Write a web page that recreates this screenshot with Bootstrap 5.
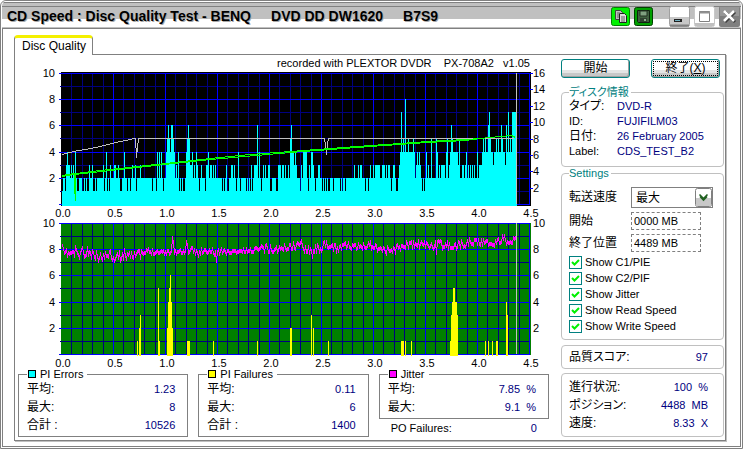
<!DOCTYPE html>
<html lang="ja">
<head>
<meta charset="utf-8">
<meta name="viewport" content="width=device-width, initial-scale=1">
<title>CD Speed : Disc Quality Test</title>
<link href="https://cdn.jsdelivr.net/npm/bootstrap@5.3.0/dist/css/bootstrap.min.css" rel="stylesheet">
<style>
  body { font: 11px/15px "Liberation Sans", "Noto Sans CJK JP", sans-serif; font-feature-settings: "palt"; color: #000; background: #fff; }
  .jp { font-size: 12px; }
  .app-window { border: 1px solid #808080; border-radius: 6px 6px 0 0; padding: 0 1px 1px; background: #fff; }
  .title-bar { height: 27px; padding: 3px 1px 0 5px; border-radius: 5px 5px 0 0; background: linear-gradient(#fff 0 1px, #808080 1px 2px, #c0c0c0 2px 5px, #808080 5px 6px, #c0c0c0 6px 18px, #fff 18px 26px, #c0c0c0 26px); }
  .title-text { font-size: 14px; font-weight: 700; line-height: 16px; white-space: pre; gap: 20px; text-shadow: 1px 1px 0 #a8a8a8; }
  .cap-btn { border: 0; padding: 0; background: none; line-height: 0; }
  .app-body { border: 1px solid #808080; padding: 6px 14px 4px 11px; }
  .sheet-tab { border: 1px solid #808080; border-top: 3px solid #f4f000; border-bottom: 0; border-radius: 4px 4px 0 0; background: #fff; padding: 0 7px; width: 79px; height: 20px; margin-bottom: -1px; font-size: 12px; line-height: 15px; text-align: left; position: relative; white-space: nowrap; color: #000; }
  .sheet { border: 1px solid #808080; box-shadow: 1px 1px 0 #c0c0c0; padding: 0 1px 3px 3px; gap: 12px; }
  .charts { min-width: 0; }
  .caption-line { height: 15px; line-height: 17px; padding-right: 19px; font-size: 11px; white-space: pre; }
  .side { width: 163px; flex: none; padding-top: 4px; }
  svg.plot { display: block; width: 100%; height: auto; font-size: 11px; overflow: visible; }
  .stats { display: grid; grid-template-columns: repeat(3, 1fr); gap: 10px; }
  .box { border: 1px solid #808080; padding: 0 12px 2px 8px; min-width: 0; }
  .box legend, .soft legend { float: none; width: auto; margin: 0; font-size: 11px; line-height: 12px; height: 12px; }
  .box legend { padding: 0 4px 0 1px; display: flex; align-items: center; gap: 4px; }
  .swatch { width: 8px; height: 8px; border: 1px solid #000; }
  .swatch-pie { background: #0ff; }
  .swatch-pif { background: #ff0; }
  .swatch-jit { background: #f0f; }
  .line18 { display: flex; justify-content: space-between; align-items: center; height: 18px; white-space: pre; }
  .val { color: #000080; }
  .soft { border: 1px solid #c0c0c0; border-radius: 4px; padding: 0 15px 0 7px; }
  .soft legend { color: #008080; padding: 0 2px 0 0; }
  .soft.settings { padding: 0 8px 6px 7px; }
  .soft.score { margin-top: 5px; padding-top: 2px; padding-bottom: 2px; }
  .push { height: 19px; width: 69px; padding: 0; border: 1px solid #008080; border-radius: 3px; background: linear-gradient(#fff 0 10px, #e4e4e4 10px 13px, #c8c8c8 13px); box-shadow: inset -1px -1px 0 #a0a0a0; font-size: 12px; line-height: 15px; color: #000; }
  .push.on { outline: 1px dotted #000; outline-offset: -3px; }
  .info { display: grid; grid-template-columns: 48px 1fr; line-height: 15px; margin: 0; padding: 1px 0 7px; white-space: nowrap; }
  .info dt, .info dd { margin: 0; font-weight: 400; height: 15px; }
  .opts { display: grid; grid-template-columns: 62px 1fr; align-items: center; row-gap: 4px; white-space: nowrap; }
  .opts .form-select { width: 82px; height: 21px; padding: 0 20px 0 4px; border: 1px solid #808080; border-radius: 0; font-size: 12px; line-height: 18px; color: #000; background: #fff url("data:image/svg+xml,%3Csvg xmlns='http://www.w3.org/2000/svg' width='17' height='19'%3E%3Crect x='.5' y='.5' width='16' height='18' rx='2' fill='%23fff' stroke='%23808080'/%3E%3Cpath d='M1 10h15v8H1z' fill='%23c8c8c8'/%3E%3Cpath d='M4.500 6.500l4 4 4-4M5 8.500l3.500 3.500 3.500-3.500' fill='none' stroke='%23206020' stroke-width='1.600'/%3E%3C/svg%3E") no-repeat right 0 center / 17px 19px; }
  .opts .form-control { width: 70px; height: 18px; min-height: 0; padding: 0 2px; border: 1px dashed #808080; border-radius: 0; font-size: 11px; line-height: 16px; color: #000; }
  .ticks { display: grid; row-gap: 3px; }
  .tick { display: flex; align-items: center; gap: 3px; min-height: 0; height: 13px; margin: 0; padding: 0; }
  .tick .form-check-input { float: none; margin: 0; width: 13px; height: 13px; border: 1px solid #008080; border-radius: 0; background-color: #fff; }
  .tick .form-check-input:checked { background-image: url("data:image/svg+xml,%3Csvg xmlns='http://www.w3.org/2000/svg' viewBox='0 0 11 11'%3E%3Cpath d='M2 5l2.500 2.500L9 3' fill='none' stroke='%2300f000' stroke-width='2'/%3E%3C/svg%3E"); border-color: #008080; background-color: #fff; }
</style>
</head>
<body>
<div class="app-window d-flex flex-column min-vh-100">
  <header class="title-bar d-flex align-items-center">
    <h1 class="title-text d-flex flex-grow-1 m-0"><span>CD Speed : Disc Quality Test - BENQ</span><span>DVD DD DW1620</span><span>B7S9</span></h1>
    <button class="cap-btn me-1" type="button" aria-label="Copy">
      <svg width="19" height="19"><rect x=".5" y=".5" width="18" height="18" rx="2" fill="#00f000" stroke="#008000"/><path d="M4.500 3.500h5l2 2v7h-7z" fill="#c0c0c0" stroke="#404040"/><path d="M8.500 6.500h5l2 2v7h-7z" fill="#e0e0e0" stroke="#202020"/><path d="M10 10h4M10 12h4M10 14h4M6 6h3M6 8h2M6 10h2" stroke="#606060"/></svg>
    </button>
    <button class="cap-btn me-3" type="button" aria-label="Save">
      <svg width="19" height="19"><rect x=".5" y=".5" width="18" height="18" rx="2" fill="#00a000" stroke="#004000"/><path d="M3.500 3.500h12v12h-11l-1-1z" fill="#406040" stroke="#102010"/><path d="M6 4h7v5H6z" fill="#80a080" stroke="#203020"/><path d="M6 11h7v4H6z" fill="#304030"/><path d="M10 12h2v2h-2z" fill="#90b090"/></svg>
    </button>
    <button class="cap-btn" type="button" aria-label="Minimize">
      <svg width="21" height="21"><rect x=".5" y=".5" width="20" height="20" rx="2" fill="#fff" stroke="#a0a0a0"/><path d="M1 11h19v8H1z" fill="#c8c8c8"/><path d="M1 19.500h19" stroke="#808080" stroke-width="2"/><path d="M5 13h8v3H5z" fill="#202020"/><path d="M6 14h5v1H6z" fill="#70b0c0"/></svg>
    </button>
    <button class="cap-btn mx-1" type="button" aria-label="Maximize">
      <svg width="21" height="21"><rect x=".5" y=".5" width="20" height="20" rx="2" fill="#fff" stroke="#c8c8c8"/><path d="M1 17h19v3H1z" fill="#c0c0c0"/><path d="M5.500 5.500h10v10h-10z" fill="#fff" stroke="#808080"/><path d="M5 6.500h11" stroke="#909090" stroke-width="2"/></svg>
    </button>
    <button class="cap-btn" type="button" aria-label="Close">
      <svg width="21" height="21"><rect width="21" height="21" rx="2" fill="#808080"/><path d="M1 1h19v9H1z" fill="#989898"/><path d="M6 6l10 10M16 6L6 16" stroke="#404040" stroke-width="3"/><path d="M5 5l10 10M15 5L5 15" stroke="#fff" stroke-width="2.500"/></svg>
    </button>
  </header>

  <main class="app-body flex-grow-1">
    <button class="sheet-tab d-block" type="button">Disc Quality</button>
    <div class="sheet d-flex">
      <section class="charts flex-grow-1">
        <div class="caption-line text-end">recorded with PLEXTOR DVDR    PX-708A2   v1.05</div>
        <svg class="plot" id="errors" viewBox="18 70 531 149" role="img" aria-label="PI Errors"></svg>
        <svg class="plot" id="failures" viewBox="18 219 531 149" role="img" aria-label="PI Failures / Jitter"></svg>
        <div class="stats align-items-start">
          <fieldset class="box">
            <legend><span class="swatch swatch-pie"></span>PI Errors</legend>
            <div class="line18"><span class="jp">平均:</span><span class="val">1.23</span></div>
            <div class="line18"><span class="jp">最大:</span><span class="val">8</span></div>
            <div class="line18"><span class="jp">合計 :</span><span class="val">10526</span></div>
          </fieldset>
          <fieldset class="box">
            <legend><span class="swatch swatch-pif"></span>PI Failures</legend>
            <div class="line18"><span class="jp">平均:</span><span class="val">0.11</span></div>
            <div class="line18"><span class="jp">最大:</span><span class="val">6</span></div>
            <div class="line18"><span class="jp">合計 :</span><span class="val">1400</span></div>
          </fieldset>
          <div>
            <fieldset class="box">
              <legend><span class="swatch swatch-jit"></span>Jitter</legend>
              <div class="line18"><span class="jp">平均:</span><span class="val">7.85  %</span></div>
              <div class="line18"><span class="jp">最大:</span><span class="val">9.1  %</span></div>
            </fieldset>
            <div class="line18 ps-2 pe-2 me-1 ms-1"><span>PO Failures:</span><span class="val">0</span></div>
          </div>
        </div>
      </section>

      <aside class="side d-flex flex-column">
        <div class="d-flex justify-content-between pe-1 mb-2">
          <button class="push" type="button">開始</button>
          <button class="push on" type="button">終了(<u>X</u>)</button>
        </div>
        <fieldset class="soft">
          <legend class="jp">ディスク情報</legend>
          <dl class="info">
            <dt class="jp">タイプ:</dt><dd class="val">DVD-R</dd>
            <dt>ID:</dt><dd class="val">FUJIFILM03</dd>
            <dt class="jp">日付:</dt><dd class="val">26 February 2005</dd>
            <dt>Label:</dt><dd class="val">CDS_TEST_B2</dd>
          </dl>
        </fieldset>
        <fieldset class="soft settings">
          <legend>Settings</legend>
          <div class="opts pt-1 mt-1">
            <label class="jp" for="speed">転送速度</label>
            <select class="form-select" id="speed"><option>最大</option></select>
            <label class="jp" for="from">開始</label>
            <input class="form-control" id="from" type="text" value="0000 MB">
            <label class="jp" for="to">終了位置</label>
            <input class="form-control" id="to" type="text" value="4489 MB">
          </div>
          <div class="ticks pt-1">
            <div class="form-check tick"><input class="form-check-input" type="checkbox" id="c1" checked><label for="c1">Show C1/PIE</label></div>
            <div class="form-check tick"><input class="form-check-input" type="checkbox" id="c2" checked><label for="c2">Show C2/PIF</label></div>
            <div class="form-check tick"><input class="form-check-input" type="checkbox" id="c3" checked><label for="c3">Show Jitter</label></div>
            <div class="form-check tick"><input class="form-check-input" type="checkbox" id="c4" checked><label for="c4">Show Read Speed</label></div>
            <div class="form-check tick"><input class="form-check-input" type="checkbox" id="c5" checked><label for="c5">Show Write Speed</label></div>
          </div>
        </fieldset>
        <div class="soft score">
          <div class="line18"><span class="jp">品質スコア:</span><span class="val">97</span></div>
        </div>
        <div class="soft mt-auto py-1">
          <div class="line18"><span class="jp">進行状況:</span><span class="val">100  %</span></div>
          <div class="line18"><span class="jp">ポジション:</span><span class="val">4488  MB</span></div>
          <div class="line18"><span class="jp">速度:</span><span class="val">8.33  X</span></div>
        </div>
      </aside>
    </div>
  </main>
</div>

<script src="https://cdn.jsdelivr.net/npm/bootstrap@5.3.0/dist/js/bootstrap.bundle.min.js"></script>
<script>
  const rect = (x, y, w, h, fill) => `<rect x="${x}" y="${y}" width="${w}" height="${h}" fill="${fill}"/>`;
  const label = (x, y, text, anchor) => `<text x="${x}" y="${y}" text-anchor="${anchor}">${text}</text>`;
  const line = (points, colour) => `<polyline points="${points}" transform="translate(.5 .5)" fill="none" stroke="${colour}" shape-rendering="crispEdges"/>`;

  // Background, grid and axis labels; top is the y of the value 10.
  function frame(top, back, minor) {
    let s = back === '#000' ? rect(61, top - 1, 470, 134, back) : rect(61, top, 470, 132, back);
    for (const major of [false, true]) {
      const colour = major ? '#00f' : minor;
      for (let i = 0; i <= 45; i++) {
        if ((i % 5 === 0) === major && i > 0) s += rect(Math.round(61 + i * 10.4), top, 1, 132, colour);
      }
      for (let v = 0; v <= 10; v++) {
        if ((v % 2 === 0) === major) s += rect(major ? 59 : 60, top + 131 - Math.round(v * 13.1), major ? 470 : 469, 1, colour);
      }
    }
    for (let v = 2; v <= 10; v += 2) s += label(55, top + 135 - Math.round(v * 13.1), v, 'end');
    for (let i = 0; i <= 9; i++) s += label(63 + i * 52, top + 144, (i / 2).toFixed(1), 'middle');
    return s;
  }
  const bar = (x, v, top, colour) => rect(x, top + 131 - Math.round(v * 13.1), 1, Math.round(v * 13.1) + 2, colour);

  // PI errors, one sample for each column.
  const errors = '12213433' + '2323242112' + '2211212113' + '2231121222' + '2223124121' + '3222332232' + '1122422122' +
    '1232231222' + '3222222222' + '2212221424' + '2421224565' + '4665423241' + '2121124565' + '3342324321' +
    '2322213342' + '3323232222' + '2212123112' + '2332321242' + '1222221212' + '1312333624' + '2123232233' +
    '1122221133' + '3233232232' + '5644343222' + '1324444213' + '2443212233' + '2212121211' + '2221222222' +
    '1212212222' + '2222322232' + '3322212212' + '3223233333' + '2233323233' + '2123321123' + '4745484454' +
    '4445423434' + '3212124232' + '2522225423' + '2333324523' + '4654444435' + '2233234232' + '3232322423' +
    '3345454467' + '5443445454' + '4654436474' + '5477777';
  let one = frame(73, '#000', '#000080');
  [...errors].forEach((v, i) => { one += bar(62 + i, +v, 73, '#0ff'); });
  one += line('62,154 73,151 85,149 100,146 115,142 125,140 134,138 135,138 136,157 137,147 138,138 324,138 325,144 326,154 327,144 328,138 513,138', '#c0c0c0');
  one += rect(516, 73, 1, 131, '#c0c0c0');
  one += line('62,175 74,173 74,186 75,200 75,173 100,170 137,166 165,163 210,158 250,154 290,151 330,148 370,145 400,143 427,141 465,139 480,138 500,136 511,135 515,137', '#0f0');
  one += line('62,176 74,174 137,167 210,159 290,152 370,146 427,142 465,140 480,138', '#0f0');
  [16, 14, 12, 10, 8, 6, 4, 2].forEach((v, i) => {
    const y = 73 + Math.round(i * 16.4);
    one += rect(529, y, 4, 1, '#00f') + label(533, y + 4, v, 'start');
  });
  document.getElementById('errors').innerHTML = one;

  // PI failures: column, value.
  const failures = [[137,1],[139,2],[140,3],[158,5],[159,1],[167,2],[168,4],[169,5],[170,6],[171,4],[172,2],[187,1],[188,1],[189,1],
    [213,1],[257,1],[290,2],[291,2],[311,3],[313,2],[328,1],[401,1],[402,1],[403,1],[405,1],[411,1],[450,1],[451,3],[452,4],[453,5],
    [454,5],[455,4],[456,4],[457,3],[485,1],[488,1],[492,1],[496,1],[497,1],[506,4],[507,3]];
  // Jitter trend: column, y, spread.
  const trend = [[62,252,4],[75,253,5],[90,254,5],[100,257,3],[108,253,5],[118,256,5],[130,252,4],[140,254,4],[148,251,2],[170,251,2],
    [190,251,4],[210,251,4],[225,251,2],[250,250,2],[262,246,4],[272,249,3],[290,246,4],[300,244,5],[312,249,4],[325,245,4],[337,248,3],
    [345,243,4],[352,247,3],[370,244,4],[385,249,4],[395,248,4],[405,244,4],[440,244,4],[455,245,4],[467,242,4],[475,240,3],[490,243,3],[500,240,4],[508,242,2],[515,238,2]];
  const peaks = { 62: 243, 75: 245, 82: 246, 87: 246, 172: 236, 173: 241, 186: 240, 187: 243, 216: 259, 297: 241, 312: 255, 370: 240, 386: 252, 436: 251, 502: 234, 504: 234 };
  let seed = 11;
  const noise = () => (seed = (seed * 16807) % 2147483647) / 2147483647 - .5;
  const jitter = [];
  for (let x = 62; x <= 515; x++) {
    const k = Math.max(1, trend.findIndex(t => t[0] >= x));
    const a = trend[k - 1], b = trend[k], f = (x - a[0]) / (b[0] - a[0]);
    const y = peaks[x] || Math.round(a[1] + (b[1] - a[1]) * f + noise() * 2 * a[2]) - 1;
    jitter.push(`${x},${y}`, `${x},${y + 3}`);
  }
  let two = frame(223, '#008000', '#000080');
  failures.forEach(([x, v]) => { two += bar(x, v, 223, '#ff0'); });
  two += rect(516, 223, 1, 131, '#c0c0c0') + line(jitter.join(' '), '#f0f');
  for (let v = 2; v <= 10; v += 2) two += label(533, 358 - Math.round(v * 13.1), v, 'start');
  document.getElementById('failures').innerHTML = two;
</script>
</body>
</html>
